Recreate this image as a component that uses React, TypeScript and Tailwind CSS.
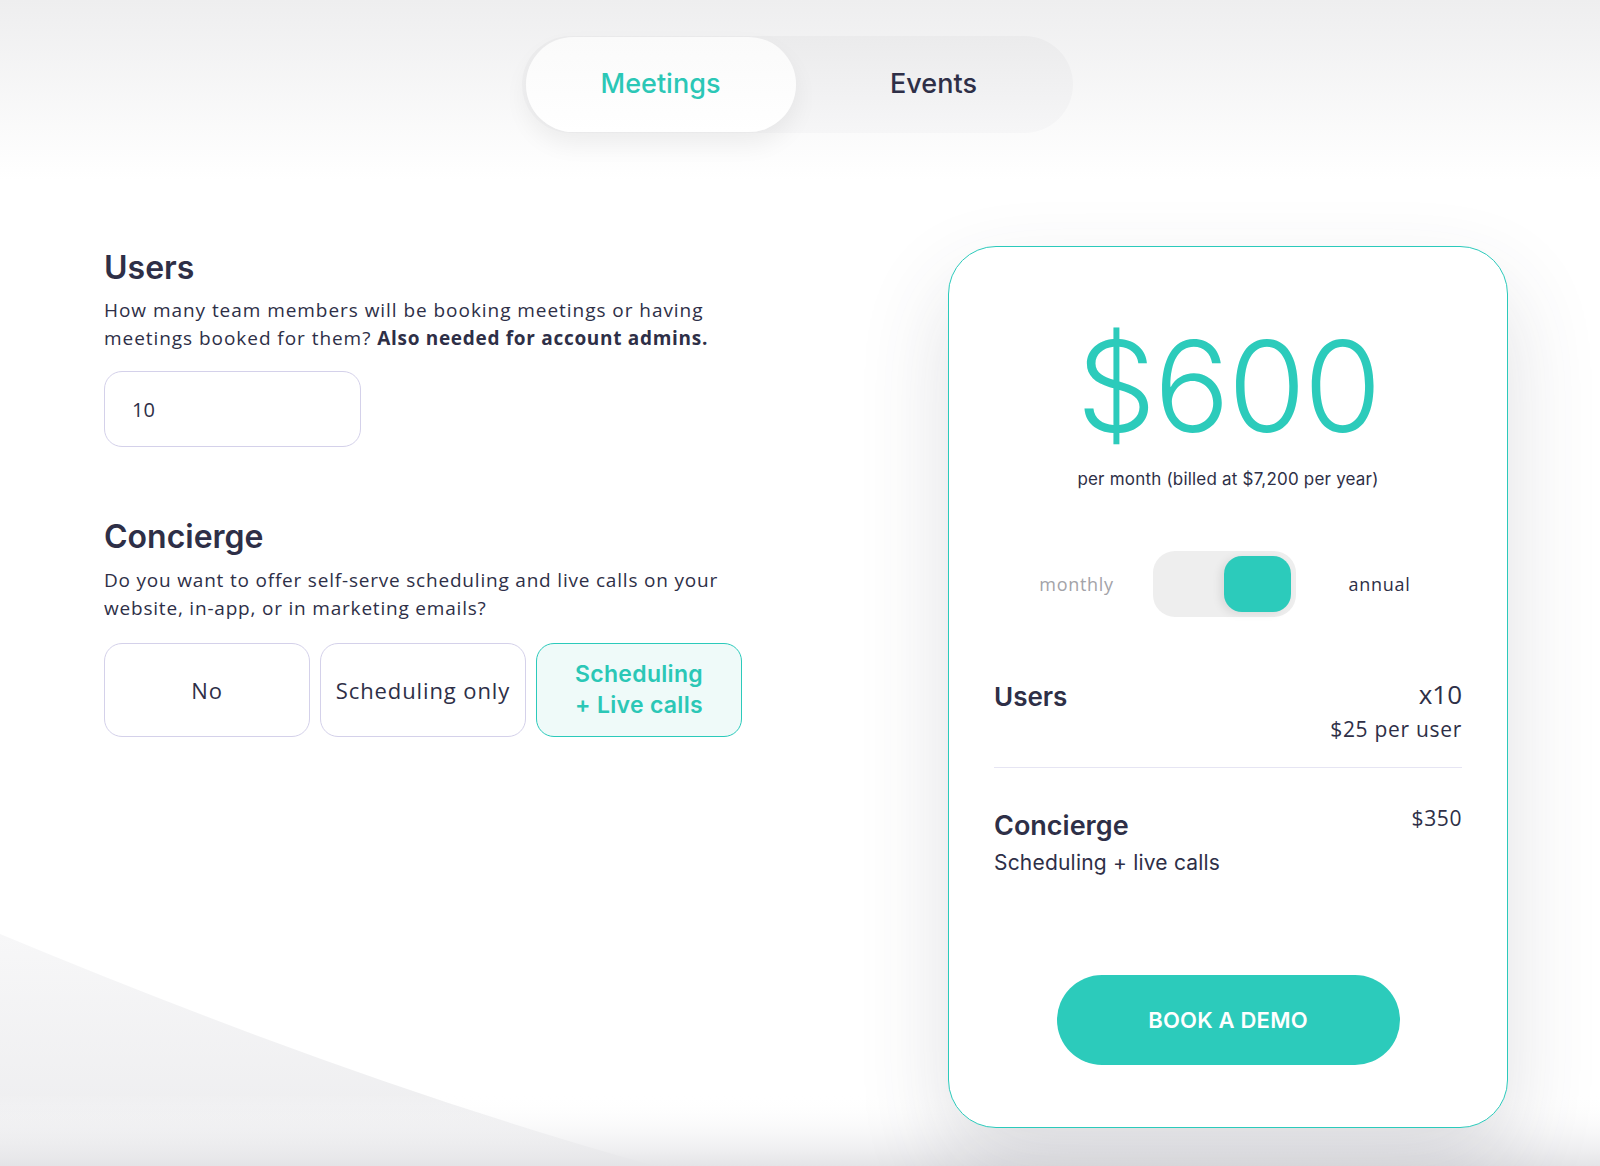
import React, { useState } from 'react';

const bodyFont = "font-['Open_Sans',_'Liberation_Sans',_sans-serif]";
const headFont = "font-['Inter',_'Liberation_Sans',_sans-serif]";

const conciergeOptions = [
  { id: 'no', label: 'No' },
  { id: 'scheduling', label: 'Scheduling only' },
  { id: 'live', label: 'Scheduling\n+ Live calls' },
];

const Tabs: React.FC = () => (
  <div className="flex justify-center pt-[36px]">
    <div className="ml-[-6px] flex h-[97px] w-[551px] rounded-full bg-gradient-to-b from-[#ebebec] to-[#f6f6f7] p-[1px] pl-[4px]">
      <button className={`${headFont} h-full w-[270px] rounded-full bg-gradient-to-b from-[#fafafa] to-white text-[27px] font-medium text-[#2bc7b6] shadow-[0_12px_24px_rgba(0,0,0,0.06)]`}>
        Meetings
      </button>
      <button className={`${headFont} h-full flex-1 text-[27px] font-medium text-[#2e2f47]`}>Events</button>
    </div>
  </div>
);

const LeftColumn: React.FC = () => {
  const [users, setUsers] = useState('10');
  const [choice, setChoice] = useState('live');
  return (
    <div className="w-[660px] pt-[2px]">
      <h2 className={`${headFont} text-[32px] font-semibold leading-[40px] text-[#2e2f47]`}>Users</h2>
      <p className={`${bodyFont} mt-[8px] text-[19px] leading-[28px] tracking-[0.95px] text-[#2e2f47]`}>
        How many team members will be booking meetings or having
        <br />
        meetings booked for them? <span className="font-bold tracking-[0.7px]">Also needed for account admins.</span>
      </p>
      <input
        value={users}
        onChange={(e) => setUsers(e.target.value)}
        className={`${bodyFont} mt-[19px] h-[76px] w-[257px] rounded-[18px] border-[1.5px] border-[#d4d1ea] bg-white px-[27px] text-[20px] text-[#2e2f47] outline-none`}
      />

      <h2 className={`${headFont} mt-[70px] text-[32px] font-semibold leading-[40px] text-[#2e2f47]`}>Concierge</h2>
      <p className={`${bodyFont} mt-[9px] text-[19px] leading-[28px] tracking-[0.8px] text-[#2e2f47]`}>
        Do you want to offer self-serve scheduling and live calls on your
        <br />
        website, in-app, or in marketing emails?
      </p>
      <div className="mt-[21px] flex gap-[10px]">
        {conciergeOptions.map((o) => {
          const active = o.id === choice;
          return (
            <button
              key={o.id}
              onClick={() => setChoice(o.id)}
              className={
                active
                  ? `${headFont} h-[94px] w-[206px] whitespace-pre-line rounded-[18px] border-[1.5px] border-[#2bcabb] bg-[#effaf9] text-[23px] font-semibold leading-[31px] tracking-[0.3px] text-[#2bc7b6]`
                  : `${bodyFont} h-[94px] w-[206px] rounded-[18px] border-[1.5px] border-[#d4d1ea] bg-white text-[22px] tracking-[0.9px] text-[#2e2f47]`
              }
            >
              {o.label}
            </button>
          );
        })}
      </div>
    </div>
  );
};

const PriceCard: React.FC = () => {
  const [annual, setAnnual] = useState(true);
  return (
    <div className="flex h-[882px] w-[560px] flex-col rounded-[48px] border-[1.5px] border-[#2bcabb] bg-white px-[45px] pt-[75px] shadow-[0_40px_90px_rgba(60,60,80,0.16)]">
      <div className={`${headFont} text-center text-[126px] font-light leading-[128px] tracking-[-2px] text-[#2ccbbb]`}>$600</div>
      <div className={`${headFont} mt-[17px] text-center text-[17px] leading-[24px] tracking-[0.2px] text-[#2e2f47]`}>
        per month (billed at $7,200 per year)
      </div>

      <div className="mt-[60px] flex h-[66px] items-center justify-center">
        <span className={`${bodyFont} w-[124px] text-center text-[18px] tracking-[0.7px] text-[#a3a3a8]`}>monthly</span>
        <button
          onClick={() => setAnnual(!annual)}
          className={`ml-[14px] mr-[22px] flex h-[66px] w-[143px] items-center rounded-[22px] bg-[#eeeeee] px-[5px] ${annual ? 'justify-end' : 'justify-start'}`}
        >
          <span className="h-[56px] w-[67px] rounded-[18px] bg-[#2ccbbb] shadow-[-4px_2px_8px_rgba(0,0,0,0.08)]" />
        </button>
        <span className={`${bodyFont} w-[124px] text-center text-[18px] tracking-[0.7px] text-[#2e2f47]`}>annual</span>
      </div>

      <div className="mt-[61px] flex items-start justify-between">
        <div className={`${headFont} pt-[3px] text-[26px] font-semibold leading-[32px] text-[#2e2f47]`}>Users</div>
        <div className="text-right">
          <div className={`${bodyFont} text-[26px] leading-[32px] text-[#2e2f47]`}>x10</div>
          <div className={`${bodyFont} mt-[5px] text-[21px] leading-[28px] tracking-[0.7px] text-[#2e2f47]`}>$25 per user</div>
        </div>
      </div>
      <div className="mt-[24px] h-px w-full bg-[#e6e5f3]" />

      <div className="mt-[36px] flex items-start justify-between">
        <div>
          <div className={`${headFont} pt-[6px] text-[27px] font-semibold leading-[32px] text-[#2e2f47]`}>Concierge</div>
          <div className={`${headFont} mt-[7px] text-[21px] leading-[28px] tracking-[0.2px] text-[#2e2f47]`}>Scheduling + live calls</div>
        </div>
        <div className={`${bodyFont} text-[21px] leading-[28px] tracking-[0.6px] text-[#2e2f47]`}>$350</div>
      </div>

      <button className={`${headFont} mx-auto mt-[98px] h-[90px] w-[343px] rounded-full bg-[#2ccbbb] text-[22px] font-semibold tracking-[0.2px] text-white`}>
        BOOK A DEMO
      </button>
    </div>
  );
};

export default function App() {
  return (
    <div className="relative h-[1166px] w-full overflow-hidden bg-white">
      {/* background shading */}
      <div className="absolute inset-x-0 top-0 h-[180px] bg-gradient-to-b from-[#eeeeef] to-white" />
      <svg className="absolute bottom-0 left-0" width="1600" height="232" viewBox="0 0 1600 232">
        <defs>
          <linearGradient id="wedge" x1="0" y1="0" x2="0" y2="1">
            <stop offset="0" stopColor="#f7f7f8" />
            <stop offset="1" stopColor="#ececee" />
          </linearGradient>
          <linearGradient id="floor" x1="0" y1="0" x2="0" y2="1">
            <stop offset="0" stopColor="#ffffff" stopOpacity="0" />
            <stop offset="1" stopColor="#e4e4e7" />
          </linearGradient>
        </defs>
        <path d="M0 0 Q 360 150, 655 232 L 0 232 Z" fill="url(#wedge)" />
        <rect x="0" y="160" width="1600" height="72" fill="url(#floor)" />
      </svg>

      <div className="relative">
        <Tabs />
        <div className="mt-[113px] flex pl-[104px]">
          <LeftColumn />
          <div className="ml-[184px]">
            <PriceCard />
          </div>
        </div>
      </div>
    </div>
  );
}
